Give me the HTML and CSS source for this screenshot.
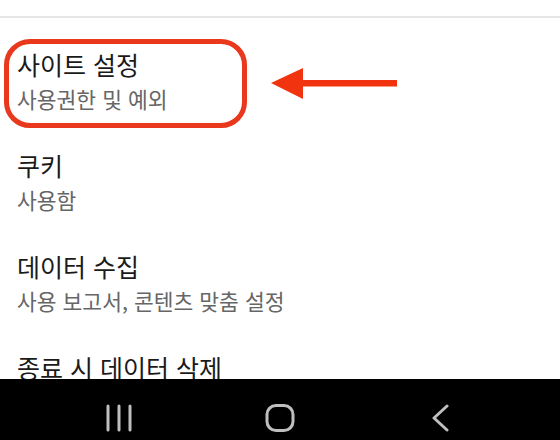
FILE: index.html
```html
<!DOCTYPE html>
<html lang="ko">
<head>
<meta charset="utf-8">
<title>설정</title>
<link rel="stylesheet" href="styles.css">
</head>
<body>
<div class="screen">
  <div class="content">
    <div class="top-space"></div>
    <div class="divider"></div>
    <ul class="list">
      <li class="item">
        <div class="title">사이트 설정</div>
        <div class="sub">사용권한 및 예외</div>
      </li>
      <li class="item">
        <div class="title">쿠키</div>
        <div class="sub">사용함</div>
      </li>
      <li class="item">
        <div class="title">데이터 수집</div>
        <div class="sub">사용 보고서, 콘텐츠 맞춤 설정</div>
      </li>
      <li class="item">
        <div class="title">종료 시 데이터 삭제</div>
      </li>
    </ul>
    <div class="highlight"></div>
    <svg class="arrow" width="130" height="34" viewBox="0 0 130 34">
      <polygon points="0,15 32,0 32,31" fill="#f2330f"/>
      <rect x="30" y="12" width="96" height="6.5" fill="#f2330f"/>
    </svg>
  </div>
  <nav class="navbar">
    <div class="nav-btn">
      <svg width="28" height="28" viewBox="0 0 28 28">
        <g stroke="#bfbfbf" stroke-width="3" stroke-linecap="round">
          <line x1="3" y1="2" x2="3" y2="26"/>
          <line x1="14" y1="2" x2="14" y2="26"/>
          <line x1="25" y1="2" x2="25" y2="26"/>
        </g>
      </svg>
    </div>
    <div class="nav-btn">
      <svg width="30" height="28" viewBox="0 0 30 28">
        <rect x="2" y="1.5" width="26" height="25" rx="9" fill="none" stroke="#bfbfbf" stroke-width="3"/>
      </svg>
    </div>
    <div class="nav-btn">
      <svg width="20" height="28" viewBox="0 0 20 28">
        <polyline points="16,2 3,14 16,26" fill="none" stroke="#bfbfbf" stroke-width="3" stroke-linecap="round" stroke-linejoin="round"/>
      </svg>
    </div>
  </nav>
</div>
</body>
</html>
```

FILE: styles.css
```css
html, body {
  margin: 0;
  padding: 0;
  background: #ffffff;
}

body {
  font-family: "Noto Sans CJK KR", "Noto Sans", sans-serif;
  width: 560px;
  height: 440px;
  overflow: hidden;
}

.screen {
  display: flex;
  flex-direction: column;
  height: 440px;
}

.content {
  position: relative;
  height: 379px;
  overflow: hidden;
  background: #ffffff;
}

.top-space {
  height: 16px;
}

.divider {
  height: 2px;
  background: #e6e6e6;
}

.list {
  list-style: none;
  margin: 0;
  padding: 12px 0 0 0;
}

.item {
  display: flex;
  flex-direction: column;
  gap: 5px;
  padding: 18px 17px 18px 17px;
}

.title {
  font-size: 25px;
  line-height: 32px;
  color: #1a1a1a;
  white-space: nowrap;
}

.sub {
  font-size: 21.5px;
  line-height: 28px;
  color: #666666;
  white-space: nowrap;
}

.highlight {
  position: absolute;
  left: 4px;
  top: 39px;
  width: 233px;
  height: 79px;
  border: 5px solid #e9381c;
  border-radius: 26px;
}

.arrow {
  position: absolute;
  left: 271px;
  top: 68px;
}

.navbar {
  flex: 1;
  background: #000000;
  display: grid;
  grid-template-columns: repeat(3, 1fr);
  padding: 0 38px;
  align-items: start;
}

.nav-btn {
  display: flex;
  justify-content: center;
  padding-top: 25px;
}

.nav-btn svg {
  display: block;
}
```
